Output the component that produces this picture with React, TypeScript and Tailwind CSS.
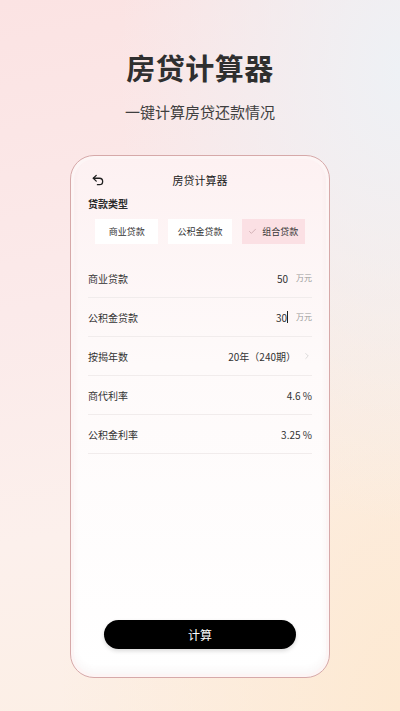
import { Undo2, ChevronRight, Check } from 'lucide-react';

const font = { fontFamily: '"Noto Sans CJK SC", "Noto Sans", sans-serif' };

interface Row {
  label: string;
  value: string;
  unit?: string;
  cursor?: boolean;
  arrow?: boolean;
}

const rows: Row[] = [
  { label: '商业贷款', value: '50', unit: '万元' },
  { label: '公积金贷款', value: '30', unit: '万元', cursor: true },
  { label: '按揭年数', value: '20年（240期）', arrow: true },
  { label: '商代利率', value: '4.6 %' },
  { label: '公积金利率', value: '3.25 %' },
];

const types = ['商业贷款', '公积金贷款', '组合贷款'];

export default function App() {
  return (
    <div
      style={font}
      className="relative w-[400px] h-[711px] overflow-hidden bg-[radial-gradient(ellipse_at_100%_10%,#eef1f5_0%,rgba(238,241,245,0)_50%),radial-gradient(ellipse_at_100%_100%,#fde9d2_0%,rgba(253,233,210,0)_60%),linear-gradient(170deg,#fbe3e3_0%,#fbeaea_40%,#fcf0ec_70%,#fcefe4_100%)]"
    >
      {/* Heading */}
      <div className="pt-[49px] flex flex-col items-center">
        <h1 className="text-[29px] leading-[36px] font-semibold text-[#2f2f2f] tracking-[0.5px]">房贷计算器</h1>
        <p className="mt-[16px] text-[15px] leading-[22px] text-[#3f3f3f]">一键计算房贷还款情况</p>
      </div>

      {/* Phone frame */}
      <div className="mx-auto mt-[32px] w-[260px] h-[523px] rounded-[24px] border border-[#d6a9a9] bg-[#fdf5f5] p-[3px]">
        <div className="h-full flex flex-col rounded-[21px] px-[14px] bg-[linear-gradient(180deg,#fdf1f2_0%,#fefafa_40%,#ffffff_100%)] shadow-[inset_0_-5px_6px_rgba(120,80,80,0.04)]">
          {/* Header */}
          <div className="mt-[11px] h-[20px] grid grid-cols-[24px_1fr_24px] items-center">
            <Undo2 className="w-[14px] h-[14px] ml-[3px] text-[#1f1f1f]" strokeWidth={2.2} />
            <div className="text-center text-[11px] text-[#222]">房贷计算器</div>
            <div />
          </div>

          <div className="mt-[7px] text-[10px] leading-[14px] font-bold text-[#2a2a2a]">贷款类型</div>

          {/* Loan type */}
          <div className="mt-[8px] px-[7px] grid grid-cols-3 gap-[10px]">
            {types.map((t, i) => (
              <div
                key={t}
                className={
                  i === 2
                    ? 'h-[25px] flex items-center justify-center gap-[5px] bg-[#fbe0e4] text-[9px] text-[#333]'
                    : 'h-[25px] flex items-center justify-center bg-white text-[9px] text-[#333]'
                }
              >
                {i === 2 && <Check className="w-[9px] h-[9px] text-[#c7a3a8]" strokeWidth={2} />}
                {t}
              </div>
            ))}
          </div>

          {/* Rows */}
          <div className="mt-[15px] flex flex-col">
            {rows.map((r) => (
              <div key={r.label} className="h-[39px] flex items-center justify-between border-b border-[#f1ecec]">
                <span className="text-[10px] text-[#333]">{r.label}</span>
                <div className="flex items-center">
                  <span className="text-[10px] text-[#333]">{r.value}</span>
                  {r.cursor && <span className="w-[1px] h-[12px] bg-[#222]" />}
                  {r.unit && <span className="ml-[8px] text-[8px] text-[#999]">{r.unit}</span>}
                  {r.arrow && <ChevronRight className="ml-[6px] w-[10px] h-[10px] text-[#c8c8c8]" strokeWidth={1.6} />}
                </div>
              </div>
            ))}
          </div>

          {/* Calculate */}
          <button className="mt-auto mb-[25px] mx-[16px] h-[29px] rounded-full bg-black text-white text-[12px] shadow-[0_2px_4px_rgba(0,0,0,0.15)]">
            计算
          </button>
        </div>
      </div>
    </div>
  );
}
